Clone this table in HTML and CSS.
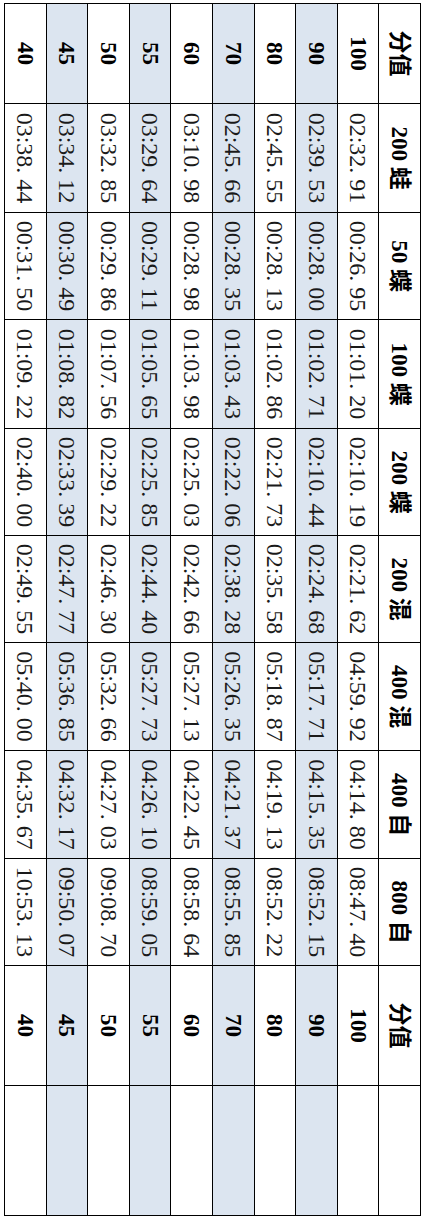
FILE: index.html
```html
<!DOCTYPE html>
<html lang="zh-CN">
<head>
<meta charset="utf-8">
<title>分值表</title>
<link rel="stylesheet" href="styles.css">
</head>
<body>
<div class="page">
  <div class="sheet">
    <table class="score">
      <colgroup>
        <col class="c-head"><col class="c-a"><col class="c-b"><col class="c-a"><col class="c-b"><col class="c-b"><col class="c-c"><col class="c-c"><col class="c-b"><col class="c-tail"><col class="c-empty">
      </colgroup>
      <tr class="hdr">
        <th>分值</th><th>200 蛙</th><th>50 蝶</th><th>100 蝶</th><th>200 蝶</th><th>200 混</th><th>400 混</th><th>400 自</th><th>800 自</th><th>分值</th><td></td>
      </tr>
      <tr>
        <th>100</th><td>02:32. 91</td><td>00:26. 95</td><td>01:01. 20</td><td>02:10. 19</td><td>02:21. 62</td><td>04:59. 92</td><td>04:14. 80</td><td>08:47. 40</td><th>100</th><td></td>
      </tr>
      <tr class="alt">
        <th>90</th><td>02:39. 53</td><td>00:28. 00</td><td>01:02. 71</td><td>02:10. 44</td><td>02:24. 68</td><td>05:17. 71</td><td>04:15. 35</td><td>08:52. 15</td><th>90</th><td></td>
      </tr>
      <tr>
        <th>80</th><td>02:45. 55</td><td>00:28. 13</td><td>01:02. 86</td><td>02:21. 73</td><td>02:35. 58</td><td>05:18. 87</td><td>04:19. 13</td><td>08:52. 22</td><th>80</th><td></td>
      </tr>
      <tr class="alt">
        <th>70</th><td>02:45. 66</td><td>00:28. 35</td><td>01:03. 43</td><td>02:22. 06</td><td>02:38. 28</td><td>05:26. 35</td><td>04:21. 37</td><td>08:55. 85</td><th>70</th><td></td>
      </tr>
      <tr>
        <th>60</th><td>03:10. 98</td><td>00:28. 98</td><td>01:03. 98</td><td>02:25. 03</td><td>02:42. 66</td><td>05:27. 13</td><td>04:22. 45</td><td>08:58. 64</td><th>60</th><td></td>
      </tr>
      <tr class="alt">
        <th>55</th><td>03:29. 64</td><td>00:29. 11</td><td>01:05. 65</td><td>02:25. 85</td><td>02:44. 40</td><td>05:27. 73</td><td>04:26. 10</td><td>08:59. 05</td><th>55</th><td></td>
      </tr>
      <tr>
        <th>50</th><td>03:32. 85</td><td>00:29. 86</td><td>01:07. 56</td><td>02:29. 22</td><td>02:46. 30</td><td>05:32. 66</td><td>04:27. 03</td><td>09:08. 70</td><th>50</th><td></td>
      </tr>
      <tr class="alt">
        <th>45</th><td>03:34. 12</td><td>00:30. 49</td><td>01:08. 82</td><td>02:33. 39</td><td>02:47. 77</td><td>05:36. 85</td><td>04:32. 17</td><td>09:50. 07</td><th>45</th><td></td>
      </tr>
      <tr>
        <th>40</th><td>03:38. 44</td><td>00:31. 50</td><td>01:09. 22</td><td>02:40. 00</td><td>02:49. 55</td><td>05:40. 00</td><td>04:35. 67</td><td>10:53. 13</td><th>40</th><td></td>
      </tr>
    </table>
  </div>
</div>
</body>
</html>
```
FILE: styles.css
```css
html, body {
  margin: 0;
  padding: 0;
  background: #ffffff;
}
.page {
  width: 425px;
  height: 1220px;
  overflow: hidden;
  background: #ffffff;
}
.sheet {
  width: 1212px;
  height: 416px;
  transform-origin: 0 0;
  transform: translate(421px, 3px) rotate(90deg);
}
.score {
  width: 1212px;
  height: 416px;
  border-collapse: collapse;
  table-layout: fixed;
  font-family: "Liberation Serif", "Noto Sans CJK SC", serif;
  color: #000;
}
.c-head { width: 100px; }
.c-a { width: 109px; }
.c-b { width: 107px; }
.c-c { width: 108px; }
.c-tail { width: 120px; }
.c-empty { width: 130px; }
.score tr {
  height: 41.6px;
}
.score th,
.score td {
  border: 1px solid #000;
  padding: 0;
  text-align: center;
  vertical-align: middle;
  white-space: nowrap;
  line-height: 1;
  font-family: "Liberation Serif", "Noto Sans CJK SC", serif;
}
.score td {
  font-size: 24px;
  font-weight: normal;
  color: #1a1a1a;
}
.score th {
  font-size: 23px;
  font-weight: bold;
}
.score tr.alt th,
.score tr.alt td {
  background: #dce5f0;
}
```
